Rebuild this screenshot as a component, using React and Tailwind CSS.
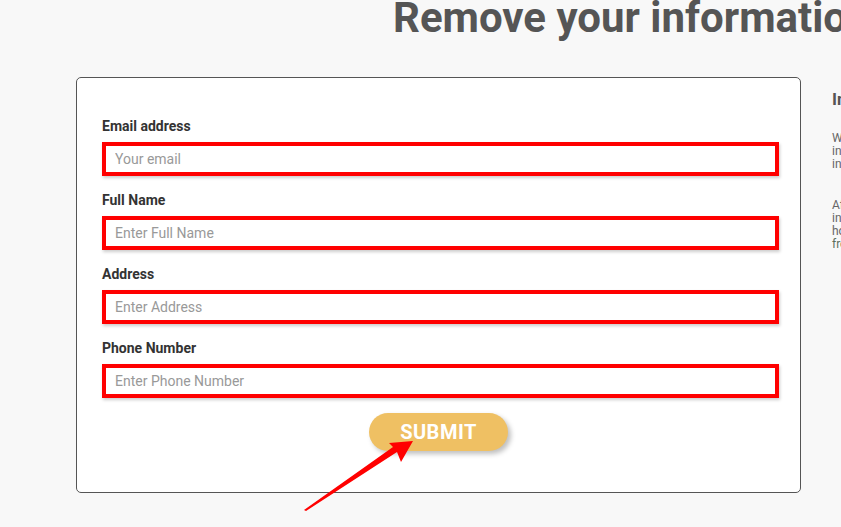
import React from "react";

const fields = [
  { label: "Email address", placeholder: "Your email" },
  { label: "Full Name", placeholder: "Enter Full Name" },
  { label: "Address", placeholder: "Enter Address" },
  { label: "Phone Number", placeholder: "Enter Phone Number" },
];

const App = () => {
  return (
    <div
      className="relative w-[841px] h-[527px] overflow-hidden bg-[#f8f8f8]"
      style={{ fontFamily: "Roboto, 'Liberation Sans', sans-serif" }}
    >
      <h1 className="pl-[393px] -mt-[3px] text-[42px] leading-none font-bold text-[#555555] whitespace-nowrap">
        Remove your information
      </h1>

      <div className="flex mt-[38px]">
        {/* form card */}
        <div className="ml-[76px] w-[725px] h-[416px] shrink-0 bg-white border border-[#555555] rounded-[5px] pt-[38px] pl-[25px] pr-[21px]">
          {fields.map((field) => (
            <div key={field.label} className="mb-[14px]">
              <div className="h-5 leading-5 text-[14px] font-bold text-[#333333]">
                {field.label}
              </div>
              <div className="mt-[6px] h-[34px] border-4 border-[#ff0000] bg-white shadow-[1px_2px_3px_rgba(0,0,0,0.2)]">
                <input
                  type="text"
                  placeholder={field.placeholder}
                  className="w-full h-full pl-[9px] pr-2 text-[14px] text-[#333333] placeholder:text-[#999999] outline-none bg-white"
                />
              </div>
            </div>
          ))}
          <div className="flex justify-center pt-[1px] pr-[4px]">
            <button
              type="button"
              className="w-[139px] h-[38px] rounded-full bg-[#efc063] text-white text-[20px] font-bold tracking-wide shadow-[3px_3px_5px_rgba(0,0,0,0.25)]"
            >
              SUBMIT
            </button>
          </div>
        </div>

        {/* info sidebar */}
        <div className="ml-[31px] w-[240px] shrink-0 pt-[10px]">
          <h3 className="text-[17px] leading-6 font-bold text-[#555555]">
            Information
          </h3>
          <p className="mt-[21px] text-[12px] leading-[13px] text-[#666666]">
            We will remove your
            <br />
            information from our
            <br />
            index within 48 hours.
          </p>
          <p className="mt-[28px] text-[12px] leading-[13px] text-[#666666]">
            After submitting, your
            <br />
            information will be hidden,
            <br />
            however it may take time
            <br />
            <span className="text-[#5d6e5d]">from search engines.</span>
          </p>
        </div>
      </div>

      {/* annotation arrow */}
      <svg
        className="absolute left-0 top-0 pointer-events-none"
        width="841"
        height="527"
        viewBox="0 0 841 527"
      >
        <polygon
          points="304,510 393,447 389,443 413,441 401,462 397,452 306,511"
          fill="#ff0000"
        />
      </svg>
    </div>
  );
};

export default App;
